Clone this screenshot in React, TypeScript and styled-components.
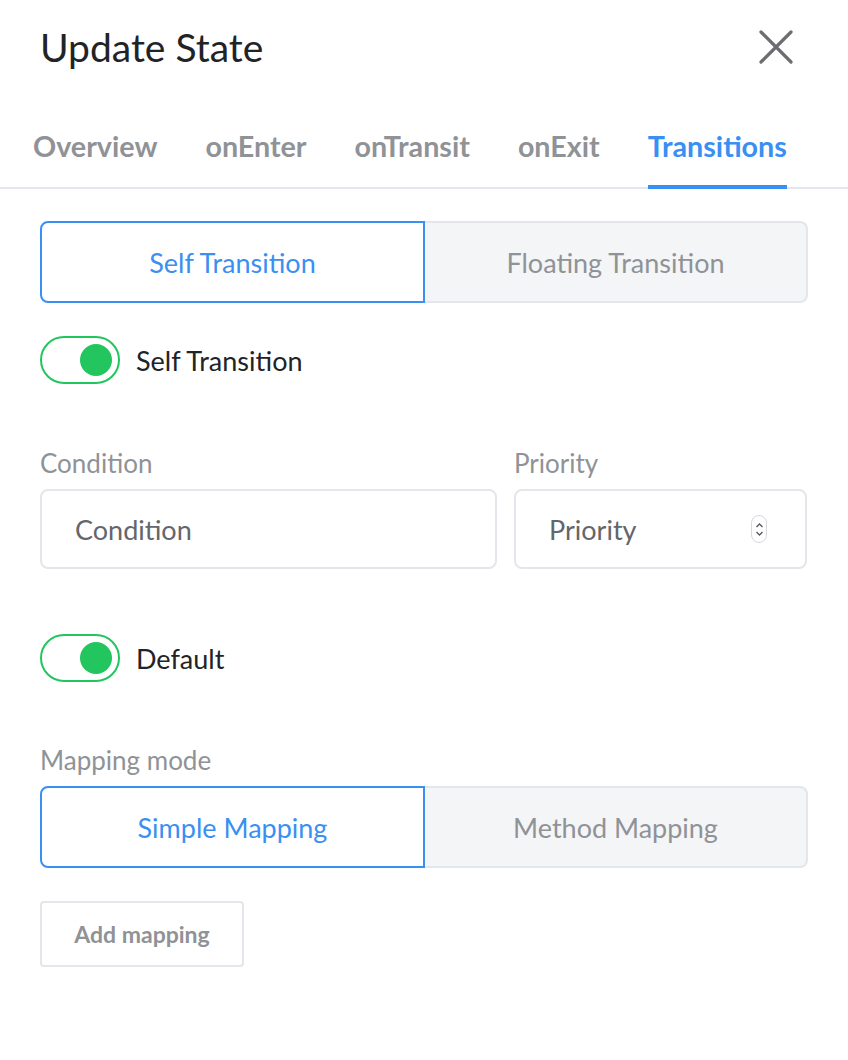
import styled, { createGlobalStyle } from 'styled-components';

const GlobalStyle = createGlobalStyle`
  html, body {
    margin: 0;
    padding: 0;
    background: #ffffff;
  }
  body {
    font-family: Lato, 'Noto Sans', sans-serif;
  }
`;

const Panel = styled.div`
  width: 848px;
  height: 1060px;
  background: #fff;
  display: flex;
  flex-direction: column;
`;

const Header = styled.div`
  display: flex;
  justify-content: space-between;
  align-items: center;
  padding: 21px 54px 0 40px;
  height: 52px;
`;

const Title = styled.h1`
  margin: 0;
  font-size: 39px;
  font-weight: 400;
  color: #222326;
`;

const CloseButton = styled.button`
  border: none;
  background: none;
  padding: 0;
  width: 36px;
  height: 36px;
  cursor: pointer;
  display: flex;
  align-items: center;
  justify-content: center;
`;

const Tabs = styled.div`
  display: flex;
  gap: 48px;
  padding: 0 0 0 33px;
  margin-top: 56px;
  border-bottom: 2px solid #e3e6ea;
`;

const Tab = styled.div<{ $active?: boolean }>`
  font-size: 28.7px;
  line-height: 34px;
  font-weight: 700;
  color: ${(p) => (p.$active ? '#3a8ff2' : '#8f9296')};
  padding-bottom: 22px;
  border-bottom: 4px solid ${(p) => (p.$active ? '#3a8ff2' : 'transparent')};
  margin-bottom: -2px;
`;

const Body = styled.div`
  padding: 32px 40px 0 40px;
  display: flex;
  flex-direction: column;
`;

const Segmented = styled.div`
  display: flex;
  height: 82px;
`;

const Segment = styled.div<{ $active?: boolean; $side: 'left' | 'right' }>`
  flex: 1;
  display: flex;
  align-items: center;
  justify-content: center;
  font-size: 27px;
  box-sizing: border-box;
  color: ${(p) => (p.$active ? '#3a8ff2' : '#8f9296')};
  background: ${(p) => (p.$active ? '#ffffff' : '#f4f5f7')};
  border: 2px solid ${(p) => (p.$active ? '#3a8ff2' : '#e3e6ea')};
  border-radius: ${(p) => (p.$side === 'left' ? '8px 0 0 8px' : '0 8px 8px 0')};
  ${(p) => (p.$side === 'right' ? 'border-left: none;' : '')}
`;

const ToggleRow = styled.label`
  display: flex;
  align-items: center;
  gap: 16px;
  font-size: 27px;
  color: #222326;
`;

const Track = styled.span`
  width: 80px;
  height: 48px;
  box-sizing: border-box;
  border: 2px solid #22c55e;
  border-radius: 24px;
  display: flex;
  align-items: center;
  justify-content: flex-end;
  padding-right: 6px;
`;

const Knob = styled.span`
  width: 32px;
  height: 32px;
  border-radius: 50%;
  background: #22c55e;
`;

const FieldRow = styled.div`
  display: flex;
  gap: 17px;
`;

const Field = styled.div<{ $width: number }>`
  width: ${(p) => p.$width}px;
  display: flex;
  flex-direction: column;
  gap: 12px;
`;

const Label = styled.div`
  font-size: 26px;
  color: #8f9296;
  line-height: 28px;
`;

const InputBox = styled.div`
  height: 80px;
  box-sizing: border-box;
  border: 2px solid #e3e6ea;
  border-radius: 8px;
  display: flex;
  align-items: center;
  justify-content: space-between;
  padding: 0 38px 0 33px;
  font-size: 27px;
  color: #63666b;
`;

const Stepper = styled.span`
  width: 16px;
  height: 28px;
  box-sizing: border-box;
  border: 1px solid #d6d8dc;
  border-radius: 8px;
  display: flex;
  align-items: center;
  justify-content: center;
`;

const AddButton = styled.button`
  align-self: flex-start;
  width: 204px;
  height: 66px;
  box-sizing: border-box;
  background: #fff;
  border: 2px solid #e3e6ea;
  border-radius: 4px;
  font-family: Lato, 'Noto Sans', sans-serif;
  font-size: 23px;
  font-weight: 700;
  color: #8f9296;
  cursor: pointer;
`;

const Spacer = styled.div<{ $h: number }>`
  height: ${(p) => p.$h}px;
  flex-shrink: 0;
`;

function Toggle({ label }: { label: string }) {
  return (
    <ToggleRow>
      <Track>
        <Knob />
      </Track>
      {label}
    </ToggleRow>
  );
}

export default function App() {
  const tabs = ['Overview', 'onEnter', 'onTransit', 'onExit', 'Transitions'];
  return (
    <Panel>
      <GlobalStyle />
      <Header>
        <Title>Update State</Title>
        <CloseButton aria-label="Close">
          <svg width="34" height="34" viewBox="0 0 34 34">
            <path d="M2 2 L32 32 M32 2 L2 32" stroke="#6b6d70" strokeWidth="3.2" strokeLinecap="round" />
          </svg>
        </CloseButton>
      </Header>
      <Tabs>
        {tabs.map((t) => (
          <Tab key={t} $active={t === 'Transitions'}>
            {t}
          </Tab>
        ))}
      </Tabs>
      <Body>
        <Segmented>
          <Segment $side="left" $active>
            Self Transition
          </Segment>
          <Segment $side="right">Floating Transition</Segment>
        </Segmented>
        <Spacer $h={33} />
        <Toggle label="Self Transition" />
        <Spacer $h={65} />
        <FieldRow>
          <Field $width={457}>
            <Label>Condition</Label>
            <InputBox>Condition</InputBox>
          </Field>
          <Field $width={293}>
            <Label>Priority</Label>
            <InputBox>
              Priority
              <Stepper>
                <svg width="9" height="19" viewBox="0 0 9 19">
                  <path d="M1.5 7 L4.5 4 L7.5 7 M1.5 12 L4.5 15 L7.5 12" stroke="#55585c" strokeWidth="1.3" fill="none" />
                </svg>
              </Stepper>
            </InputBox>
          </Field>
        </FieldRow>
        <Spacer $h={65} />
        <Toggle label="Default" />
        <Spacer $h={64} />
        <Label>Mapping mode</Label>
        <Spacer $h={12} />
        <Segmented>
          <Segment $side="left" $active>
            Simple Mapping
          </Segment>
          <Segment $side="right">Method Mapping</Segment>
        </Segmented>
        <Spacer $h={33} />
        <AddButton>Add mapping</AddButton>
      </Body>
    </Panel>
  );
}
